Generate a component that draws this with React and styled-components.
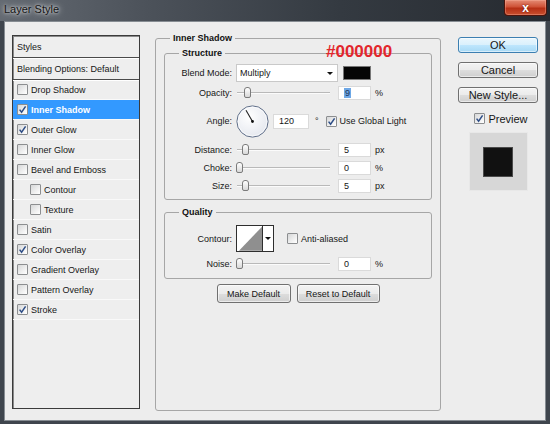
import React from "react";
import styled, { createGlobalStyle } from "styled-components";

const GlobalStyle = createGlobalStyle`
  html, body {
    margin: 0;
    padding: 0;
    background: #2b3037;
  }
  body {
    font-family: "Liberation Sans", Arial, sans-serif;
    color: #161616;
  }
`;

const Window = styled.div`
  position: relative;
  width: 550px;
  height: 424px;
  display: flex;
  flex-direction: column;
  background: #3f454d;
  overflow: hidden;
`;

const TitleBar = styled.div`
  height: 21px;
  flex: none;
  display: flex;
  align-items: flex-start;
  justify-content: space-between;
  padding-left: 4px;
  background: linear-gradient(90deg, #646a72 0%, #4b5159 28%, #343a41 62%, #262a30 100%);
`;

const Title = styled.span`
  margin-top: 3px;
  font-size: 11px;
  color: #151515;
  text-shadow: 0 0 6px rgba(255, 255, 255, 0.9), 0 0 3px rgba(255, 255, 255, 0.7);
`;

const CloseButton = styled.div`
  width: 43px;
  height: 16px;
  margin-right: 3px;
  box-sizing: border-box;
  border: 1px solid #4e140b;
  border-top: none;
  border-radius: 0 0 4px 4px;
  background: linear-gradient(#e48b74 0%, #cf5237 45%, #b62f15 55%, #c9502f 100%);
  box-shadow: inset 0 0 0 1px rgba(255, 190, 170, 0.35);
  display: flex;
  align-items: center;
  justify-content: center;
  color: #fff;
  font-weight: bold;
  font-size: 12px;
  line-height: 1;
  text-shadow: 0 0 2px #5a1005;
`;

const Body = styled.div`
  flex: 1;
  margin: 0 4px 3px 4px;
  box-sizing: border-box;
  border: 1px solid #868c92;
  background: #ededed;
  display: flex;
  align-items: flex-start;
  padding: 10px 0 0 7px;
`;

const StylesPanel = styled.div`
  width: 128px;
  height: 374px;
  margin-top: 3px;
  flex: none;
  box-sizing: border-box;
  border: 1px solid #3b3b3b;
  box-shadow: inset 1px 1px 0 #8a8a8a;
  background: #eeeeee;
  font-size: 9px;
`;

const PanelHeader = styled.div`
  height: 21px;
  display: flex;
  align-items: center;
  padding-left: 4px;
  border-bottom: 1px solid #4a4a4a;
  box-shadow: 0 1px 0 #ffffff;
`;

const StyleRow = styled.div`
  height: 19px;
  display: flex;
  align-items: center;
  padding-left: ${(p) => (p.$indent ? 17 : 4)}px;
  border-bottom: 1px solid #f9f9f9;
  background: ${(p) => (p.$active ? "#3399ff" : "transparent")};
  color: ${(p) => (p.$active ? "#ffffff" : "#161616")};
  font-weight: ${(p) => (p.$active ? "bold" : "normal")};
`;

const Box = styled.span`
  width: 11px;
  height: 11px;
  flex: none;
  box-sizing: border-box;
  border: 1px solid #8c8e90;
  border-radius: 1px;
  background: linear-gradient(135deg, #d6d7d8 0%, #f4f4f4 70%, #ffffff 100%);
  margin-right: ${(p) => p.$gap ?? 3}px;
  display: inline-flex;
  align-items: center;
  justify-content: center;
`;

const Check = ({ on, gap }) => (
  <Box $gap={gap}>
    {on && (
      <svg width="9" height="9" viewBox="0 0 9 9">
        <path d="M1.6 4.6 L3.6 7.2 L7.6 1.4" fill="none" stroke="#2d4d86" strokeWidth="1.5" />
      </svg>
    )}
  </Box>
);

const Group = styled.fieldset`
  margin: ${(p) => p.$margin || "0"};
  padding: ${(p) => p.$pad};
  border: 1px solid #a6a6a6;
  border-radius: 3px;
  min-width: 0;
  box-sizing: border-box;
  width: ${(p) => (p.$w ? `${p.$w}px` : "auto")};
  height: ${(p) => (p.$h ? `${p.$h}px` : "auto")};
  font-size: 9px;
`;

const GroupTitle = styled.legend`
  margin-left: ${(p) => p.$offset}px;
  padding: 0 3px;
  font-weight: bold;
  font-size: 9px;
  line-height: 12px;
  color: #111;
`;

const MainGroup = styled(Group)`
  margin-left: 15px;
  flex: none;
`;

const Row = styled.div`
  display: flex;
  align-items: center;
  height: ${(p) => p.$h || 14}px;
  margin-top: ${(p) => p.$mt || 0}px;
`;

const FieldLabel = styled.span`
  width: 67px;
  margin-right: 4px;
  text-align: right;
  flex: none;
`;

const Select = styled.div`
  width: 102px;
  height: 18px;
  box-sizing: border-box;
  background: #fff;
  border: 1px solid #c9c9c9;
  display: flex;
  align-items: center;
  justify-content: space-between;
  padding: 0 4px 0 3px;
`;

const Arrow = styled.span`
  width: 0;
  height: 0;
  border-left: 3px solid transparent;
  border-right: 3px solid transparent;
  border-top: 3px solid #111;
`;

const Swatch = styled.div`
  width: 28px;
  height: 14px;
  margin-left: 5px;
  box-sizing: border-box;
  background: #050505;
  border: 1px solid #777;
`;

const Track = styled.div`
  position: relative;
  width: 94px;
  height: 14px;
  flex: none;
  &::before {
    content: "";
    position: absolute;
    left: 1px;
    right: 0;
    top: 6px;
    height: 1px;
    background: #b9b9b9;
    box-shadow: 0 1px 0 #fbfbfb;
  }
`;

const Thumb = styled.span`
  position: absolute;
  top: 1px;
  width: 7px;
  height: 11px;
  box-sizing: border-box;
  border: 1px solid #7b7b7b;
  border-radius: 3px 3px 2px 2px;
  background: linear-gradient(#ffffff, #d8d8d8);
`;

const Input = styled.div`
  width: ${(p) => p.$w || 33}px;
  height: ${(p) => p.$h || 14}px;
  margin-left: ${(p) => p.$ml ?? 8}px;
  box-sizing: border-box;
  background: #fff;
  border: 1px solid #dadada;
  display: flex;
  align-items: center;
  padding-left: 5px;
  flex: none;
`;

const Selected = styled.span`
  background: #6fa8e6;
  color: #1d3558;
  padding: 0 1px;
  line-height: 10px;
`;

const Unit = styled.span`
  margin-left: ${(p) => p.$ml ?? 4}px;
`;

const Slider = ({ at }) => (
  <Track>
    <Thumb style={{ left: at }} />
  </Track>
);

const Dial = () => (
  <svg width="33" height="33" viewBox="0 0 33 33">
    <defs>
      <radialGradient id="dialfill" cx="40%" cy="35%" r="70%">
        <stop offset="0%" stopColor="#ffffff" />
        <stop offset="100%" stopColor="#e4e7ee" />
      </radialGradient>
    </defs>
    <circle cx="16.5" cy="16.5" r="15.6" fill="url(#dialfill)" stroke="#5f6e88" strokeWidth="1" />
    <circle cx="16.5" cy="16.5" r="14.4" fill="none" stroke="#ffffff" strokeWidth="0.8" opacity="0.8" />
    <line x1="16.5" y1="16.5" x2="10" y2="5.2" stroke="#222" strokeWidth="1.1" />
    <circle cx="16.5" cy="16.5" r="1.4" fill="#111" />
  </svg>
);

const ContourBox = styled.div`
  width: 38px;
  height: 27px;
  box-sizing: border-box;
  border: 1px solid #2e2e2e;
  background: #fff;
  display: flex;
`;

const ContourDrop = styled.div`
  width: 10px;
  border-left: 1px solid #2e2e2e;
  display: flex;
  align-items: center;
  justify-content: center;
`;

const CheckLabel = styled.label`
  display: flex;
  align-items: center;
  margin-left: ${(p) => p.$ml || 0}px;
`;

const ButtonBar = styled.div`
  display: flex;
  justify-content: center;
  gap: 6px;
  margin-top: 5px;
`;

const SmallButton = styled.button`
  width: ${(p) => p.$w}px;
  height: 19px;
  padding: 0;
  font-family: inherit;
  font-size: 9px;
  color: #161616;
  border: 1px solid #707070;
  border-radius: 3px;
  background: linear-gradient(#f3f3f3 0%, #ebebeb 50%, #dddddd 51%, #cfcfcf 100%);
  box-shadow: inset 0 0 0 1px rgba(255, 255, 255, 0.6);
`;

const SideColumn = styled.div`
  width: 80px;
  margin-left: 17px;
  margin-top: 5px;
  display: flex;
  flex-direction: column;
  align-items: center;
  font-size: 11px;
`;

const SideButton = styled.button`
  width: 80px;
  height: 16px;
  margin-bottom: 9px;
  padding: 0;
  font-family: inherit;
  font-size: 11px;
  line-height: 14px;
  color: #161616;
  border: 1px solid ${(p) => (p.$primary ? "#3c7fb1" : "#707070")};
  border-radius: 3px;
  background: ${(p) =>
    p.$primary
      ? "linear-gradient(#eaf6fd 0%, #d9f0fc 50%, #bee6fd 51%, #a7d9f5 100%)"
      : "linear-gradient(#f3f3f3 0%, #ebebeb 50%, #dddddd 51%, #cfcfcf 100%)"};
  box-shadow: inset 0 0 0 1px rgba(255, 255, 255, 0.55);
`;

const PreviewToggle = styled.label`
  display: flex;
  align-items: center;
  height: 11px;
  margin-top: 1px;
  margin-left: 6px;
`;

const PreviewFrame = styled.div`
  width: 59px;
  height: 59px;
  margin-top: 8px;
  box-sizing: border-box;
  background: #d7d7d7;
  border: 1px solid #e8e8e8;
  display: flex;
  align-items: center;
  justify-content: center;
`;

const PreviewSquare = styled.div`
  width: 30px;
  height: 30px;
  box-sizing: border-box;
  background: #111;
  border: 1px solid #4a4a4a;
`;

const Annotation = styled.div`
  position: absolute;
  left: 326px;
  top: 43px;
  font-size: 17px;
  line-height: 17px;
  font-weight: bold;
  color: #e2262c;
`;

const styleList = [
  { name: "Drop Shadow" },
  { name: "Inner Shadow", on: true, active: true },
  { name: "Outer Glow", on: true },
  { name: "Inner Glow" },
  { name: "Bevel and Emboss" },
  { name: "Contour", indent: true },
  { name: "Texture", indent: true },
  { name: "Satin" },
  { name: "Color Overlay", on: true },
  { name: "Gradient Overlay" },
  { name: "Pattern Overlay" },
  { name: "Stroke", on: true },
];

const App = () => (
  <>
    <GlobalStyle />
    <Window>
      <TitleBar>
        <Title>Layer Style</Title>
        <CloseButton>x</CloseButton>
      </TitleBar>
      <Body>
        <StylesPanel>
          <PanelHeader>Styles</PanelHeader>
          <PanelHeader>Blending Options: Default</PanelHeader>
          {styleList.map((s) => (
            <StyleRow key={s.name} $indent={s.indent} $active={s.active}>
              <Check on={s.on} />
              {s.name}
            </StyleRow>
          ))}
        </StylesPanel>

        <MainGroup $w={286} $h={379} $pad="3px 8px 0 8px">
          <GroupTitle $offset={6}>Inner Shadow</GroupTitle>

          <Group $pad="5px 0 6px 0">
            <GroupTitle $offset={14}>Structure</GroupTitle>
            <Row $h={18}>
              <FieldLabel>Blend Mode:</FieldLabel>
              <Select>
                Multiply
                <Arrow />
              </Select>
              <Swatch />
            </Row>
            <Row $mt={4}>
              <FieldLabel>Opacity:</FieldLabel>
              <Slider at={8} />
              <Input>
                <Selected>9</Selected>
              </Input>
              <Unit>%</Unit>
            </Row>
            <Row $h={32} $mt={5}>
              <FieldLabel>Angle:</FieldLabel>
              <Dial />
              <Input $w={36} $h={15} $ml={4}>
                120
              </Input>
              <Unit $ml={6}>°</Unit>
              <CheckLabel $ml={7}>
                <Check on />
                Use Global Light
              </CheckLabel>
            </Row>
            <Row $mt={6}>
              <FieldLabel>Distance:</FieldLabel>
              <Slider at={6} />
              <Input>5</Input>
              <Unit>px</Unit>
            </Row>
            <Row $mt={4}>
              <FieldLabel>Choke:</FieldLabel>
              <Slider at={0} />
              <Input>0</Input>
              <Unit>%</Unit>
            </Row>
            <Row $mt={4}>
              <FieldLabel>Size:</FieldLabel>
              <Slider at={6} />
              <Input>5</Input>
              <Unit>px</Unit>
            </Row>
          </Group>

          <Group $margin="6px 0 0 0" $pad="7px 0 7px 0">
            <GroupTitle $offset={14}>Quality</GroupTitle>
            <Row $h={27}>
              <FieldLabel>Contour:</FieldLabel>
              <ContourBox>
                <svg width="26" height="25" viewBox="0 0 26 25">
                  <polygon points="2,25 26,0 26,25" fill="#8f8f8f" />
                </svg>
                <ContourDrop>
                  <Arrow />
                </ContourDrop>
              </ContourBox>
              <CheckLabel $ml={13}>
                <Check />
                Anti-aliased
              </CheckLabel>
            </Row>
            <Row $mt={5}>
              <FieldLabel>Noise:</FieldLabel>
              <Slider at={0} />
              <Input>0</Input>
              <Unit>%</Unit>
            </Row>
          </Group>

          <ButtonBar>
            <SmallButton $w={74}>Make Default</SmallButton>
            <SmallButton $w={83}>Reset to Default</SmallButton>
          </ButtonBar>
        </MainGroup>

        <SideColumn>
          <SideButton $primary>OK</SideButton>
          <SideButton>Cancel</SideButton>
          <SideButton>New Style...</SideButton>
          <PreviewToggle>
            <Check on gap={3} />
            Preview
          </PreviewToggle>
          <PreviewFrame>
            <PreviewSquare />
          </PreviewFrame>
        </SideColumn>
      </Body>
      <Annotation>#000000</Annotation>
    </Window>
  </>
);

export default App;
